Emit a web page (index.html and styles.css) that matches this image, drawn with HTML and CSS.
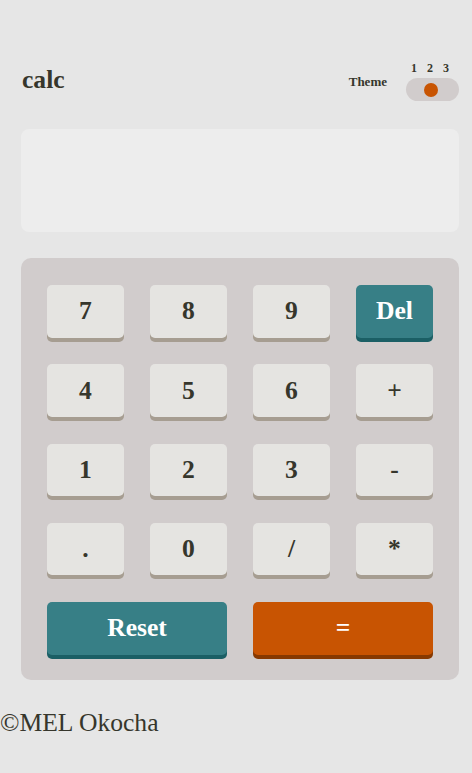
FILE: index.html
```html
<!DOCTYPE html>
<html lang="en">
<head>
<meta charset="utf-8">
<title>calc</title>
<link rel="stylesheet" href="styles.css">
</head>
<body>
<main class="calc">
  <header class="header">
    <h1 class="logo">calc</h1>
    <div class="theme">
      <span class="theme-label">Theme</span>
      <div class="switch">
        <div class="switch-nums"><span>1</span><span>2</span><span>3</span></div>
        <div class="switch-track"><span class="switch-dot"></span></div>
      </div>
    </div>
  </header>
  <div class="display"></div>
  <div class="keypad">
    <button class="key">7</button>
    <button class="key">8</button>
    <button class="key">9</button>
    <button class="key key-del">Del</button>
    <button class="key">4</button>
    <button class="key">5</button>
    <button class="key">6</button>
    <button class="key">+</button>
    <button class="key">1</button>
    <button class="key">2</button>
    <button class="key">3</button>
    <button class="key">-</button>
    <button class="key">.</button>
    <button class="key">0</button>
    <button class="key">/</button>
    <button class="key">*</button>
    <button class="key key-del key-wide">Reset</button>
    <button class="key key-eq key-wide">=</button>
  </div>
</main>
<footer class="footer">©MEL Okocha</footer>
</body>
</html>
```
FILE: styles.css
```css
* { box-sizing: border-box; }
body {
  margin: 0;
  background: #e6e6e6;
  color: #36362c;
  font-family: "Liberation Serif", "Times New Roman", serif;
}
.calc {
  margin: 0 13px 0 21px;
  padding-top: 61px;
}
.header {
  display: flex;
  justify-content: space-between;
  align-items: flex-end;
}
.logo {
  margin: 0 0 6px 1px;
  font-size: 25.6px;
  line-height: 30px;
  font-weight: bold;
}
.theme {
  display: flex;
  align-items: flex-end;
  gap: 19px;
}
.theme-label {
  font-size: 13px;
  line-height: 15px;
  font-weight: bold;
  margin-bottom: 12px;
}
.switch {
  width: 53px;
  display: flex;
  flex-direction: column;
  gap: 3px;
}
.switch-nums {
  display: flex;
  justify-content: space-around;
  padding-right: 5px;
  font-size: 12px;
  line-height: 14px;
  font-weight: bold;
}
.switch-track {
  position: relative;
  height: 23px;
  border-radius: 12px;
  background: #d1cccc;
}
.switch-dot {
  position: absolute;
  top: 5px;
  left: 18px;
  width: 14px;
  height: 14px;
  border-radius: 50%;
  background: #c85402;
}
.display {
  margin-top: 28px;
  height: 103px;
  border-radius: 8px;
  background: #ededed;
}
.keypad {
  margin-top: 26px;
  padding: 27px 26px 25.5px;
  border-radius: 10px;
  background: #d1cccc;
  display: grid;
  grid-template-columns: repeat(4, 77px);
  grid-auto-rows: 52.5px;
  column-gap: 26px;
  row-gap: 26.8px;
}
.key {
  border: 0;
  border-radius: 5px;
  background: #e5e4e1;
  box-shadow: 0 4px 0 #a69d91;
  color: #36362c;
  font-family: "Liberation Serif", "Times New Roman", serif;
  font-size: 25.6px;
  font-weight: bold;
  padding: 0;
  cursor: pointer;
}
.key-del {
  background: #377f86;
  box-shadow: 0 4px 0 #1b5f65;
  color: #fff;
}
.key-eq {
  background: #c85402;
  box-shadow: 0 4px 0 #873901;
  color: #fff;
}
.key-wide {
  grid-column: span 2;
}
.footer {
  margin-top: 27.5px;
  font-size: 25.6px;
  line-height: 29px;
  color: #36362c;
}
```
